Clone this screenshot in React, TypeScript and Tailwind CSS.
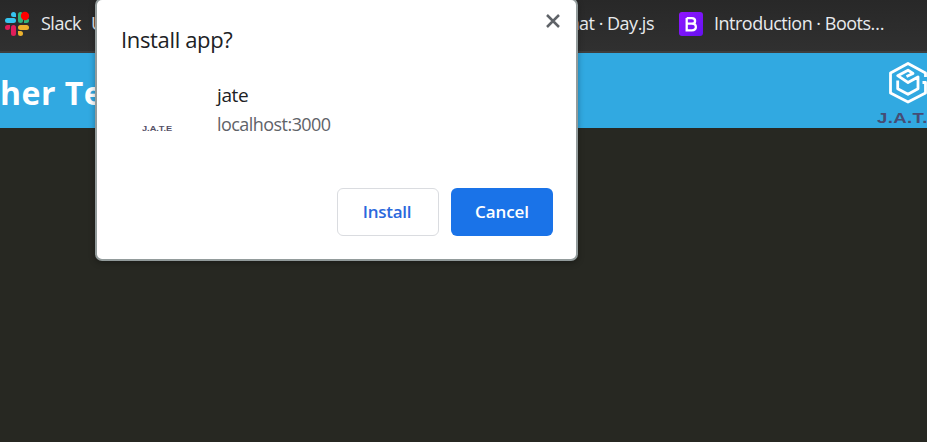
function SlackIcon() {
  return (
    <svg viewBox="0 0 26 26" className="h-[26px] w-[26px] shrink-0" aria-hidden="true">
      <g fill="#36c5f0">
        <path d="M12 6H9.500A2.500 2.500 0 1 1 12 3.500z" />
        <rect x="1" y="7" width="11" height="5" rx="2.500" />
      </g>
      <g fill="#2eb67d">
        <rect x="14" y="1" width="5" height="11" rx="2.500" />
        <path d="M20 12V9.500A2.500 2.500 0 1 1 22.500 12z" />
      </g>
      <g fill="#ecb22e">
        <rect x="14" y="14" width="11" height="5" rx="2.500" />
        <path d="M14 20H16.500A2.500 2.500 0 1 1 14 22.500z" />
      </g>
      <g fill="#e01e5a">
        <rect x="7" y="14" width="5" height="11" rx="2.500" />
        <path d="M6 14V16.500A2.500 2.500 0 1 1 3.500 14z" />
      </g>
      <circle cx="21" cy="5" r="4.200" fill="#f00" />
    </svg>
  );
}

function BootstrapIcon() {
  return (
    <span className="flex h-6 w-6 shrink-0 items-center justify-center rounded-[3px] bg-gradient-to-br from-[#9013fe] to-[#6610f2]">
      <svg viewBox="0 0 24 24" className="h-6 w-6" fill="none" stroke="#fff" strokeWidth="2.300" aria-hidden="true">
        <path d="M7.700 6.100H12.800c4.400 0 4.400 5.600 0 5.600H7.700M12.800 11.700c5.400 0 5.400 6.600 0 6.600H7.700V6.100" />
      </svg>
    </span>
  );
}

function BrandMark() {
  return (
    <svg viewBox="0 0 40 44" className="h-11 w-10 shrink-0" fill="none" stroke="#fff" strokeWidth="2.800" strokeLinejoin="round" aria-hidden="true">
      <path d="M37.500 16V12L20 2.500L2.500 12V32L20 41L37.500 32V21.500H34.500" />
      <path d="M18.500 15.500L25 12.500L20 9.200L9.700 14.700L20 21.500L30 16V27.700L20 33.300L9.700 27.700V19.500" />
    </svg>
  );
}

function InstallDialog() {
  return (
    <section
      role="dialog"
      aria-label="Install app?"
      className="absolute left-[95px] top-[-2px] h-[263px] w-[483px] rounded-[7px] border-2 border-[#929b9b] bg-white shadow-[0_2px_6px_rgba(0,0,0,0.3)]"
    >
      <div className="flex h-[73px] items-start justify-between pl-6 pr-4">
        <h2 className="mt-[23px] whitespace-nowrap text-[22px] leading-8 tracking-[-0.350px] text-[#202124]">Install app?</h2>
        <button aria-label="Close" className="mt-[14px]">
          <svg viewBox="0 0 14 14" className="h-[14px] w-[14px]" stroke="#5f6368" strokeWidth="2.500" fill="none">
            <path d="M1 1l12 12M13 1L1 13" />
          </svg>
        </button>
      </div>
      <div className="flex h-[115px] pl-[45px]">
        <div className="w-[75px] pt-[50px]">
          <span className="block w-fit origin-left scale-x-[1.150] font-['Liberation_Sans',sans-serif] text-[8px] font-bold leading-3 text-[#555067]">J.A.T.E</span>
        </div>
        <div className="pt-[8px]">
          <p className="text-[19px] leading-[28px] tracking-[-0.400px] text-[#202124]">jate</p>
          <p className="pt-px text-[18px] leading-[29px] tracking-[-0.550px] text-[#5f6368]">localhost:3000</p>
        </div>
      </div>
      <div className="flex justify-end gap-3 pr-[23px]">
        <button className="h-12 w-[102px] rounded-[6px] border border-[#dadce0] pr-0.5 text-[17px] font-semibold tracking-[-0.250px] text-[#2b68dc]">Install</button>
        <button className="h-12 w-[102px] rounded-[6px] bg-[#1a73e8] text-[17px] font-semibold tracking-[-0.100px] text-white">Cancel</button>
      </div>
    </section>
  );
}

export default function App() {
  return (
    <div className="relative flex h-[442px] w-[927px] flex-col overflow-hidden bg-[#272822] font-['Open_Sans','Noto_Sans',sans-serif]">
      <nav className="flex h-[53px] items-center border-b-2 border-[#3d3d3d] bg-gradient-to-b from-[#282828] to-[#303030] pb-[3px] text-[18px] tracking-[-0.500px] text-[#e8eaed]">
        <div className="flex w-[91px] shrink-0 items-center pl-1">
          <SlackIcon />
          <span className="ml-[11px] -mt-0.5">Slack</span>
        </div>
        <span className="-mt-0.5 w-[441px] shrink-0">U</span>
        <span className="-mt-0.5 flex w-[122px] shrink-0 justify-end whitespace-nowrap">Format · Day.js</span>
        <span className="ml-[25px] flex items-center gap-[11px]">
          <BootstrapIcon />
          <span className="-mt-0.5 whitespace-nowrap">Introduction · Boots…</span>
        </span>
      </nav>
      <header className="flex h-[75px] shrink-0 justify-between bg-[#31a9e1]">
        <h1 className="mt-[17px] whitespace-nowrap text-[32px] font-bold leading-[46px] tracking-[0.500px] text-white">her Text</h1>
        <div className="w-[50px] pt-[8px]">
          <div className="ml-[11px]">
            <BrandMark />
          </div>
          <span className="block w-fit origin-left scale-x-[1.240] font-['Liberation_Sans',sans-serif] text-[15px] font-bold leading-[26px] tracking-[0.300px] text-[#454d75]">J.A.T.</span>
        </div>
      </header>
      <main className="flex-1" />
      <InstallDialog />
    </div>
  );
}
